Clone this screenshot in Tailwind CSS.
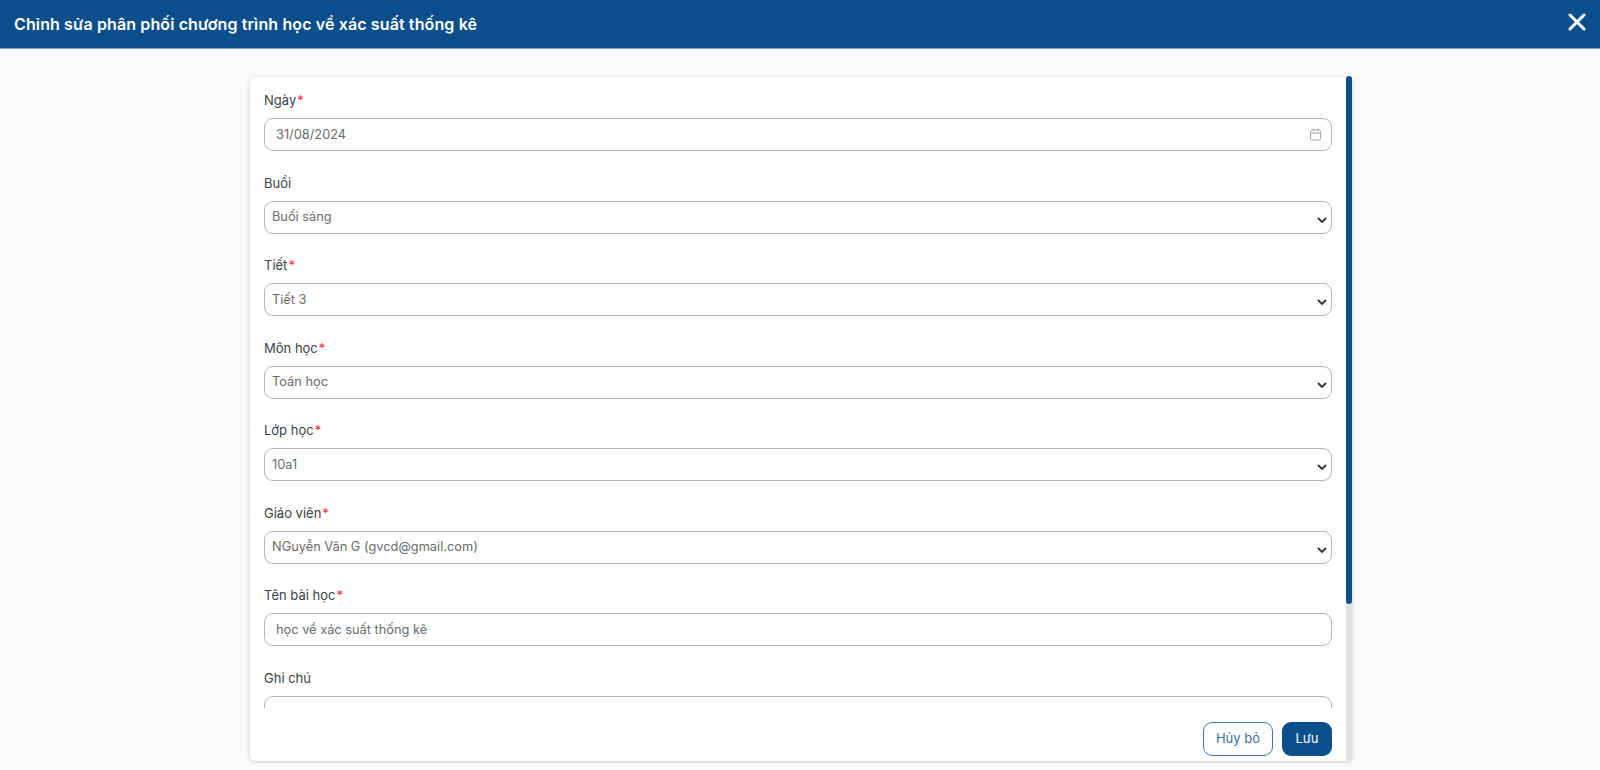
<!DOCTYPE html>
<html lang="vi">
  <head>
    <meta charset="UTF-8" />
    <meta name="viewport" content="width=device-width, initial-scale=1.0" />
    <title>Chỉnh sửa phân phối chương trình</title>
    <script src="https://cdn.jsdelivr.net/npm/@tailwindcss/browser@4"></script>
  </head>

  <body class="h-[770px] overflow-hidden bg-[#fafafa] font-['Inter',sans-serif] text-[13px] text-[#3b3f46]">
    <!-- Header -->
    <header class="flex h-[49px] items-center justify-between border-b border-[#7f9fbd] bg-[#0a4f8c] pl-[14px] pr-[13px] text-white">
      <h1 class="text-[16px] font-semibold tracking-[0.12px]">Chỉnh sửa phân phối chương trình học về xác suất thống kê</h1>
      <svg class="mb-[4px] size-[20px]" viewBox="0 0 20 20" fill="none" stroke="currentColor" stroke-width="3" stroke-linecap="round">
        <path d="M3 3 17 17M17 3 3 17" />
      </svg>
    </header>

    <!-- Card -->
    <main class="ml-[250px] mt-[28px] flex h-[684px] w-[1102px] rounded-[5px] bg-white shadow-[0_1px_4px_rgba(0,0,0,0.18)]">
      <div class="flex min-w-0 flex-1 flex-col pl-[14px] pr-[14px]">
        <!-- Form fields -->
        <div class="h-[631px] overflow-hidden pt-[14px]">
          <div class="mb-[9px] h-[18px] leading-[18px]">Ngày<span class="ml-[1px] text-red-500">*</span></div>
          <div class="mb-[22.5px] flex h-[33px] items-center justify-between rounded-[9px] border border-[#b5b5b5] pl-[11px] pr-[9px] text-[12.8px] text-[#6b6b6b]">
            <span>31/08/2024</span>
            <svg class="size-[13px] text-[#a8a8a8]" viewBox="0 0 13 13" fill="none" stroke="currentColor" stroke-width="1">
              <rect x="1.5" y="2" width="10" height="10" rx="1.5" />
              <path d="M1.5 5h10M4 .5V3M9 .5V3" />
            </svg>
          </div>

          <div class="mb-[9px] h-[18px] leading-[18px]">Buổi</div>
          <div class="mb-[22.5px] flex h-[33px] items-center justify-between rounded-[9px] border border-[#b5b5b5] pl-[7px] pr-[4px] text-[12.8px] text-[#6b6b6b]">
            <span>Buổi sáng</span>
            <svg class="mt-[5px] size-[10px] text-[#333]" viewBox="0 0 10 10" fill="none" stroke="currentColor" stroke-width="1.8">
              <path d="M1 3l4 4 4-4" />
            </svg>
          </div>

          <div class="mb-[9px] h-[18px] leading-[18px]">Tiết<span class="ml-[1px] text-red-500">*</span></div>
          <div class="mb-[22.5px] flex h-[33px] items-center justify-between rounded-[9px] border border-[#b5b5b5] pl-[7px] pr-[4px] text-[12.8px] text-[#6b6b6b]">
            <span>Tiết 3</span>
            <svg class="mt-[5px] size-[10px] text-[#333]" viewBox="0 0 10 10" fill="none" stroke="currentColor" stroke-width="1.8">
              <path d="M1 3l4 4 4-4" />
            </svg>
          </div>

          <div class="mb-[9px] h-[18px] leading-[18px]">Môn học<span class="ml-[1px] text-red-500">*</span></div>
          <div class="mb-[22.5px] flex h-[33px] items-center justify-between rounded-[9px] border border-[#b5b5b5] pl-[7px] pr-[4px] text-[12.8px] text-[#6b6b6b]">
            <span>Toán học</span>
            <svg class="mt-[5px] size-[10px] text-[#333]" viewBox="0 0 10 10" fill="none" stroke="currentColor" stroke-width="1.8">
              <path d="M1 3l4 4 4-4" />
            </svg>
          </div>

          <div class="mb-[9px] h-[18px] leading-[18px]">Lớp học<span class="ml-[1px] text-red-500">*</span></div>
          <div class="mb-[22.5px] flex h-[33px] items-center justify-between rounded-[9px] border border-[#b5b5b5] pl-[7px] pr-[4px] text-[12.8px] text-[#6b6b6b]">
            <span>10a1</span>
            <svg class="mt-[5px] size-[10px] text-[#333]" viewBox="0 0 10 10" fill="none" stroke="currentColor" stroke-width="1.8">
              <path d="M1 3l4 4 4-4" />
            </svg>
          </div>

          <div class="mb-[9px] h-[18px] leading-[18px]">Giáo viên<span class="ml-[1px] text-red-500">*</span></div>
          <div class="mb-[22.5px] flex h-[33px] items-center justify-between rounded-[9px] border border-[#b5b5b5] pl-[7px] pr-[4px] text-[12.8px] text-[#6b6b6b]">
            <span>NGuyễn Văn G (gvcd@gmail.com)</span>
            <svg class="mt-[5px] size-[10px] text-[#333]" viewBox="0 0 10 10" fill="none" stroke="currentColor" stroke-width="1.8">
              <path d="M1 3l4 4 4-4" />
            </svg>
          </div>

          <div class="mb-[9px] h-[18px] leading-[18px]">Tên bài học<span class="ml-[1px] text-red-500">*</span></div>
          <div class="mb-[22.5px] flex h-[33px] items-center rounded-[9px] border border-[#b5b5b5] pl-[11px] text-[12.8px] text-[#6b6b6b]">
            <span>học về xác suất thống kê</span>
          </div>

          <div class="mb-[9px] h-[18px] leading-[18px]">Ghi chú</div>
          <div class="h-[80px] rounded-[9px] border border-[#b5b5b5]"></div>
        </div>

        <!-- Footer buttons -->
        <div class="mt-[14px] flex justify-end gap-[9px]">
          <button class="h-[34px] w-[70px] rounded-[9px] border border-[#3f76a8] text-[#3f6fa3]">Hủy bỏ</button>
          <button class="h-[34px] w-[50px] rounded-[9px] bg-[#0a4f8c] text-white">Lưu</button>
        </div>
      </div>

      <!-- Scrollbar -->
      <div class="-mt-px w-[6px] shrink-0 rounded-[3px] bg-[#e2e2e2]">
        <div class="h-[528px] rounded-[3px] bg-[#0a4f8c]"></div>
      </div>
    </main>
  </body>
</html>
